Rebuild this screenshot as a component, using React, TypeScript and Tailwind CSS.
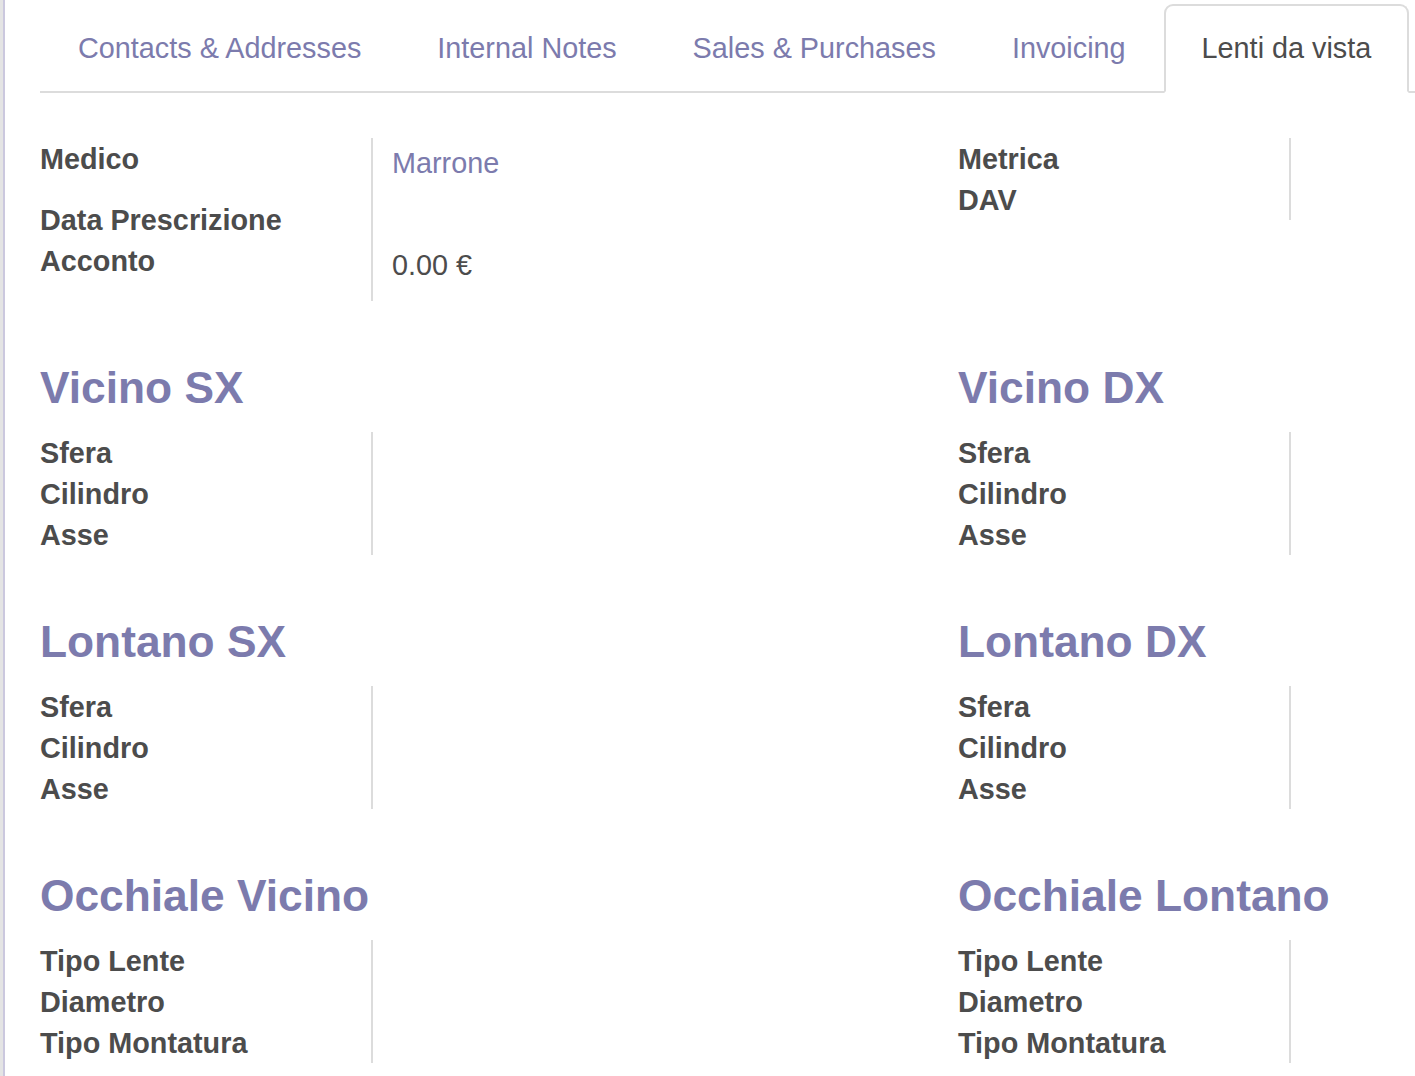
const tabs = ['Contacts & Addresses', 'Internal Notes', 'Sales & Purchases', 'Invoicing', 'Lenti da vista']

interface Row {
    label: string,
    value?: string,
    link?: boolean,
    tall?: boolean,
}

function FieldGroup({ rows }: { rows: Row[] }) {
    return (
        <div className="flex flex-col">
            {rows.map((r) => (
                <div key={r.label} className={`flex flex-row ${r.tall ? 'h-[61px]' : 'h-[41px]'}`}>
                    <div className="w-[333px] shrink-0 border-r-2 border-[#dcdcdc] font-bold text-[#4c4c4c] leading-[41px] pt-[0.5px]">
                        {r.label}
                    </div>
                    <div className={`pl-[19px] pt-[4.5px] leading-[41px] ${r.link ? 'text-[#7c7bad]' : 'text-[#4c4c4c]'}`}>
                        {r.value}
                    </div>
                </div>
            ))}
        </div>
    )
}

function Section({ title, rows }: { title: string, rows: Row[] }) {
    return (
        <div className="flex flex-col">
            <div className="text-[44.3px] font-bold leading-[52px] text-[#7c7bad]">{title}</div>
            <div className="mt-[18px]">
                <FieldGroup rows={rows} />
            </div>
        </div>
    )
}

const lens: Row[] = [{ label: 'Sfera' }, { label: 'Cilindro' }, { label: 'Asse' }]
const glasses: Row[] = [{ label: 'Tipo Lente' }, { label: 'Diametro' }, { label: 'Tipo Montatura' }]

export default function App() {
    return (
        <div
            className="flex flex-row w-[1415px] h-[1076px] overflow-hidden bg-white text-[28.8px]"
            style={{ fontFamily: '"Liberation Sans", Arial, sans-serif' }}
        >
            <div className="w-[3px] shrink-0 bg-[#e4e4e4]"></div>
            <div className="w-[2px] shrink-0 bg-[#cbc8de]"></div>
            <div className="flex flex-col grow pl-[35px]">
                {/* tab strip */}
                <div className="flex flex-row pt-[4px] border-b-2 border-[#dcdcdc] whitespace-nowrap">
                    {tabs.map((t) => {
                        const active = t === 'Lenti da vista'
                        return (
                            <div
                                key={t}
                                className={`flex items-center shrink-0 h-[89px] pt-[1px] px-[36px] border-2 rounded-t-[9px] -mb-[2px] ${active
                                    ? 'border-[#dcdcdc] border-b-white bg-white text-[#4c4c4c]'
                                    : 'border-transparent text-[#7c7bad]'}`}
                            >
                                {t}
                            </div>
                        )
                    })}
                </div>

                <div className="grid grid-cols-[918px_918px] pt-[45px]">
                    <FieldGroup
                        rows={[
                            { label: 'Medico', value: 'Marrone', link: true, tall: true },
                            { label: 'Data Prescrizione' },
                            { label: 'Acconto', value: '0.00 €', tall: true },
                        ]}
                    />
                    <FieldGroup rows={[{ label: 'Metrica' }, { label: 'DAV' }]} />
                </div>

                <div className="grid grid-cols-[918px_918px] mt-[61px] gap-y-[61px]">
                    <Section title="Vicino SX" rows={lens} />
                    <Section title="Vicino DX" rows={lens} />
                    <Section title="Lontano SX" rows={lens} />
                    <Section title="Lontano DX" rows={lens} />
                    <Section title="Occhiale Vicino" rows={glasses} />
                    <Section title="Occhiale Lontano" rows={glasses} />
                </div>
            </div>
        </div>
    )
}
